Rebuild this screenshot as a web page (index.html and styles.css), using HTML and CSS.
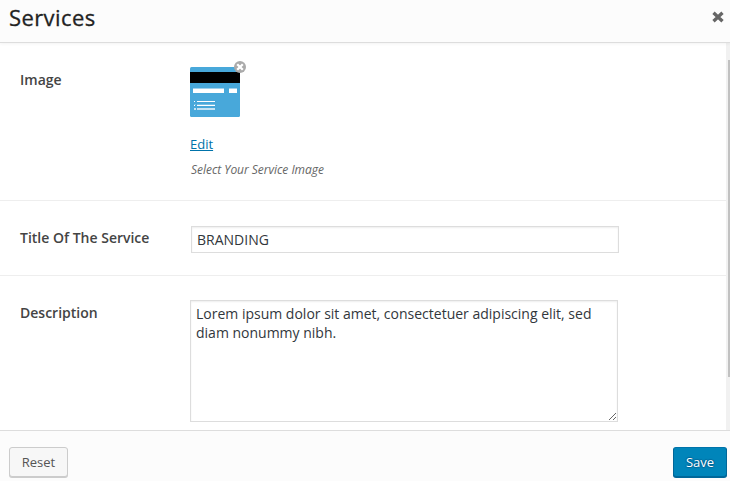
FILE: index.html
```html
<!DOCTYPE html>
<html lang="en">
<head>
<meta charset="utf-8">
<title>Services</title>
<link rel="stylesheet" href="styles.css">
</head>
<body>
<div class="modal">
  <header class="modal-header">
    <h1>Services</h1>
    <svg class="close" width="12" height="12" viewBox="0 0 12 12" aria-label="Close"><path d="M1.5 1.7 10.5 10.3M10.5 1.7 1.5 10.3" stroke="#666" stroke-width="3.3"/></svg>
  </header>
  <main class="modal-body">
    <div class="fields">
      <section class="row row-image">
        <div class="label">Image</div>
        <div class="control">
          <div class="thumb">
            <svg class="picture" width="50" height="50" viewBox="0 0 50 50">
              <rect width="50" height="50" rx="1.5" fill="#48a8da"/>
              <path d="M0 5h50v11H0z" fill="#000"/>
              <path d="M3 21h31v1H3zM39 21h8v1h-8z" fill="#a0d1ec"/>
              <path d="M3 22h31v4H3zM39 22h8v4h-8z" fill="#fff"/>
              <path d="M4 34h1v1H4zM7 34h18v1H7zM4 38h1v1H4zM7 38h18v1H7z" fill="#fff"/>
              <path d="M4 37h2v1H4zM7 37h18v1H7z" fill="#76bee3"/>
              <path d="M4 41h2v2H4zM7 41h18v2H7z" fill="#c5e3f3"/>
            </svg>
            <svg class="remove" width="12" height="12" viewBox="0 0 12 12"><circle cx="6" cy="6" r="6" fill="#aaa"/><path d="m3.2 3.2 5.6 5.6m0-5.6-5.6 5.6" stroke="#fff" stroke-width="2.3"/></svg>
          </div>
          <a class="edit" href="#">Edit</a>
          <div class="hint">Select Your Service Image</div>
        </div>
      </section>
      <section class="row row-title">
        <div class="label">Title Of The Service</div>
        <div class="control"><input class="text" type="text" value="BRANDING"></div>
      </section>
      <section class="row row-description">
        <div class="label">Description</div>
        <div class="control"><textarea class="area" spellcheck="false">Lorem ipsum dolor sit amet, consectetuer adipiscing elit, sed diam nonummy nibh.</textarea></div>
      </section>
    </div>
    <div class="track"><div class="handle"></div></div>
  </main>
  <footer class="modal-footer">
    <button class="button">Reset</button>
    <button class="button primary">Save</button>
  </footer>
</div>
</body>
</html>
```
FILE: styles.css
```css
* { box-sizing: border-box; }
body {
  margin: 0;
  font-family: "Open Sans", sans-serif;
  font-size: 14px;
  color: #444;
  background: #fcfcfc;
}
.modal {
  display: flex;
  flex-direction: column;
  height: 481px;
  overflow: hidden;
}
.modal-header {
  display: flex;
  justify-content: space-between;
  height: 43px;
  padding: 0 6px 0 9px;
  border-bottom: 1px solid #ddd;
  box-shadow: 0 1px 3px rgba(0, 0, 0, .05);
  position: relative;
}
h1 {
  margin: 0;
  font-size: 22px;
  font-weight: 400;
  letter-spacing: .4px;
  line-height: 34px;
  color: #222;
  -webkit-text-stroke: .3px #222;
}
.close { margin-top: 11px; }
.modal-body {
  display: flex;
  height: 387px;
  background: #fff;
  overflow: hidden;
}
.fields { flex: 1; }
.row {
  display: flex;
  padding: 24px 0 0 20px;
  border-bottom: 1px solid #eee;
}
.row-image { height: 158px; }
.row-title { height: 75px; }
.row-description { height: 170px; border-bottom: 0; }
.label {
  width: 170px;
  font-weight: 600;
  line-height: 26px;
}
.thumb {
  position: relative;
  width: 50px;
  height: 50px;
}
.picture { display: block; }
.remove {
  position: absolute;
  top: -6px;
  right: -6px;
}
.edit {
  display: block;
  width: max-content;
  margin-top: 18px;
  font-size: 13px;
  line-height: 19px;
  color: #0073aa;
}
.hint {
  margin: 7px 0 0 1px;
  font-size: 12px;
  font-style: italic;
  letter-spacing: -.03px;
  line-height: 18px;
  color: #666;
}
.text, .area {
  display: block;
  width: 428px;
  border: 1px solid #ddd;
  border-radius: 0;
  background: #fff;
  box-shadow: inset 0 1px 2px rgba(0, 0, 0, .07);
  font: 14px "Open Sans", sans-serif;
  color: #32373c;
  outline: 0;
}
.text {
  height: 27px;
  margin: 1px 0 0 1px;
  padding: 3px 5px;
}
.area {
  height: 122px;
  padding: 3px 5px;
  line-height: 19px;
}
.track {
  width: 4px;
  padding: 17px 0 0 2px;
  background: #f1f1f1;
}
.handle {
  height: 317px;
  background: #c1c1c1;
}
.modal-footer {
  display: flex;
  justify-content: space-between;
  height: 51px;
  padding: 16px 3px 0 9px;
  border-top: 1px solid #ddd;
}
.button {
  width: 59px;
  height: 30px;
  padding: 0;
  border: 1px solid #ccc;
  border-radius: 3px;
  background: #f7f7f7;
  box-shadow: 0 1px 0 #ccc;
  font: 13px/28px "Open Sans", sans-serif;
  color: #555;
}
.primary {
  width: 54px;
  border-color: #0073aa #006799 #006799;
  background: #0085ba;
  box-shadow: 0 1px 0 #006799;
  color: #fff;
  text-shadow: 0 -1px 1px #006799, 1px 0 1px #006799, 0 1px 1px #006799, -1px 0 1px #006799;
}
```
